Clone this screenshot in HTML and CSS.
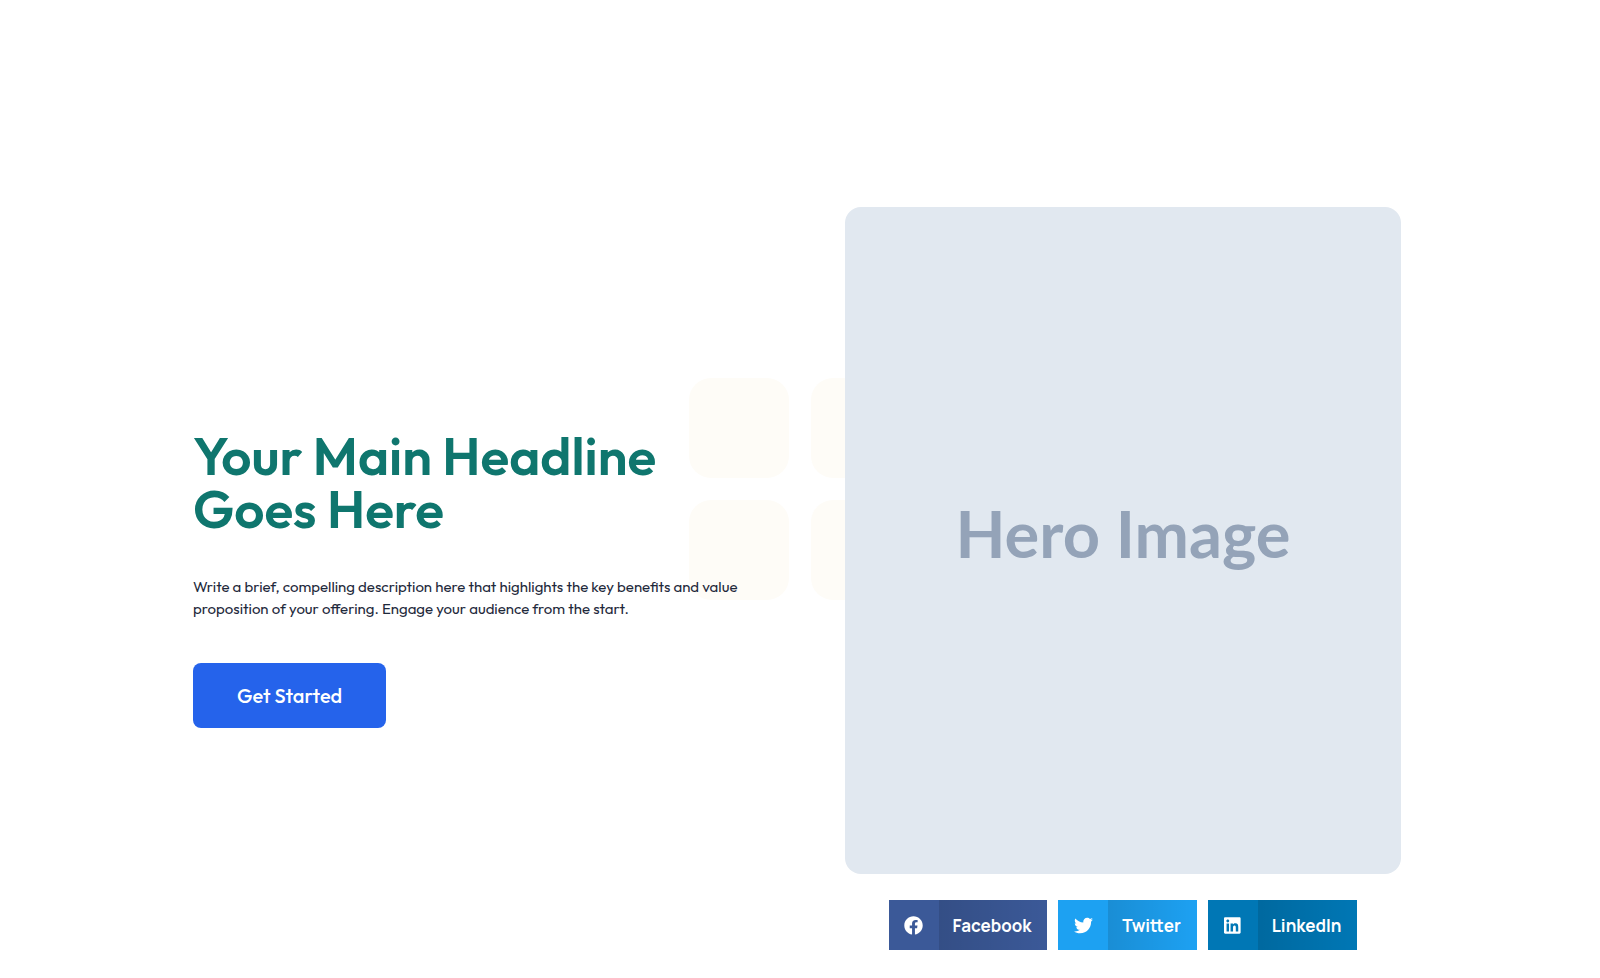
FILE: index.html
```html
<!DOCTYPE html>
<html lang="en">
<head>
<meta charset="UTF-8">
<meta name="viewport" content="width=device-width, initial-scale=1.0">
<title>Your Main Headline Goes Here</title>
<link rel="stylesheet" href="styles.css">
</head>
<body>
<main class="hero">
    <div class="hero-shapes" aria-hidden="true">
        <span></span>
        <span></span>
        <span></span>
        <span></span>
    </div>
    <div class="hero-inner">
        <div class="hero-text">
            <h1>Your Main Headline Goes Here</h1>
            <p>Write a brief, compelling description here that highlights the key benefits and value proposition of your offering. Engage your audience from the start.</p>
            <a class="btn" href="#">Get Started</a>
        </div>
        <div class="hero-media">
            <div class="hero-image">Hero Image</div>
            <div class="share">
                <button type="button" class="share-btn facebook">
                    <span class="share-icon">
                        <svg viewBox="0 0 512 512" aria-hidden="true"><path d="M504 256C504 119 393 8 256 8S8 119 8 256c0 123.780 90.690 226.380 209.250 245V327.690h-63V256h63v-54.640c0-62.150 37-96.480 93.670-96.480 27.140 0 55.520 4.840 55.520 4.840v61h-31.280c-30.800 0-40.410 19.120-40.410 38.730V256h68.780l-11 71.690h-57.780V501C413.310 482.380 504 379.780 504 256z"/></svg>
                    </span>
                    <span class="share-label">Facebook</span>
                </button>
                <button type="button" class="share-btn twitter">
                    <span class="share-icon">
                        <svg viewBox="0 0 512 512" aria-hidden="true"><path d="M459.370 151.716c.325 4.548.325 9.097.325 13.645 0 138.720-105.583 298.558-298.558 298.558-59.452 0-114.680-17.219-161.137-47.106 8.447.974 16.568 1.299 25.340 1.299 49.055 0 94.213-16.568 130.274-44.832-46.132-.975-84.792-31.188-98.112-72.772 6.498.974 12.995 1.624 19.818 1.624 9.421 0 18.843-1.300 27.614-3.573-48.081-9.747-84.143-51.980-84.143-102.985v-1.299c13.969 7.797 30.214 12.670 47.431 13.319-28.264-18.843-46.781-51.005-46.781-87.391 0-19.492 5.197-37.360 14.294-52.954 51.655 63.675 129.300 105.258 216.365 109.807-1.624-7.797-2.599-15.918-2.599-24.040 0-57.828 46.782-104.934 104.934-104.934 30.213 0 57.502 12.670 76.670 33.137 23.715-4.548 46.456-13.320 66.599-25.340-7.798 24.366-24.366 44.833-46.132 57.827 21.117-2.273 41.584-8.122 60.426-16.243-14.292 20.791-32.161 39.308-52.628 54.253z"/></svg>
                    </span>
                    <span class="share-label">Twitter</span>
                </button>
                <button type="button" class="share-btn linkedin">
                    <span class="share-icon">
                        <svg viewBox="0 0 448 512" aria-hidden="true"><path d="M416 32H31.900C14.300 32 0 46.500 0 64.300v383.400C0 465.500 14.300 480 31.900 480H416c17.600 0 32-14.500 32-32.300V64.300c0-17.800-14.400-32.300-32-32.300zM135.400 416H69V202.200h66.500V416zm-33.200-243c-21.300 0-38.500-17.300-38.500-38.500S80.900 96 102.200 96c21.200 0 38.500 17.300 38.500 38.500 0 21.300-17.200 38.500-38.500 38.500zm282.100 243h-66.400V312c0-24.800-.5-56.700-34.500-56.700-34.600 0-39.900 27-39.900 54.900V416h-66.400V202.200h63.700v29.200h.9c8.900-16.800 30.600-34.500 62.900-34.500 67.200 0 79.700 44.300 79.700 101.900V416z"/></svg>
                    </span>
                    <span class="share-label">LinkedIn</span>
                </button>
            </div>
        </div>
    </div>
</main>
</body>
</html>
```

FILE: styles.css
```css
* {
    box-sizing: border-box;
}

body {
    margin: 0;
    background: #fff;
    font-family: Outfit, Lato, sans-serif;
    color: #1e293b;
}

.hero {
    position: relative;
    min-height: 100vh;
    padding: 207px 38px 28px 32px;
}

/* decorative squares behind the content */
.hero-shapes {
    position: absolute;
    top: 50%;
    left: 50%;
    transform: translate(-50%, -50%);
    display: grid;
    grid-template-columns: 100px 100px;
    grid-auto-rows: 100px;
    gap: 22px;
}

.hero-shapes span {
    background: #fefcf7;
    border-radius: 22px;
}

.hero-inner {
    position: relative;
    display: grid;
    grid-template-columns: 1fr 1fr;
    gap: 96px;
    align-items: center;
    max-width: 1208px;
    margin: 0 auto;
}

h1 {
    margin: 0 0 41px;
    font-size: 53px;
    line-height: 53px;
    font-weight: 600;
    color: #0f766e;
}

.hero-text p {
    margin: 0 0 43px;
    font-size: 15px;
    line-height: 22px;
}

.btn {
    display: inline-flex;
    align-items: center;
    height: 65px;
    padding: 0 44px;
    border-radius: 8px;
    background: #2563eb;
    color: #fff;
    font-size: 20px;
    font-weight: 500;
    text-decoration: none;
    vertical-align: top;
}

.btn:hover {
    background: #1d4ed8;
}

.hero-image {
    display: flex;
    align-items: center;
    justify-content: center;
    aspect-ratio: 5 / 6;
    padding-bottom: 16px;
    border-radius: 16px;
    background: #e1e8f0;
    color: #94a3b8;
    font-family: Lato, sans-serif;
    font-size: 65px;
    font-weight: 700;
}

.share {
    display: flex;
    flex-wrap: wrap;
    justify-content: center;
    gap: 11px;
    margin-top: 26px;
}

.share-btn {
    display: flex;
    height: 50px;
    padding: 0;
    border: none;
    color: #fff;
    font-family: Manrope, Inter, sans-serif;
    font-size: 17px;
    font-weight: 700;
    cursor: pointer;
}

.share-icon {
    display: flex;
    align-items: center;
    justify-content: center;
    width: 50px;
    height: 50px;
}

.share-icon svg {
    height: 19px;
    fill: currentColor;
}

.share-label {
    display: flex;
    align-items: center;
    height: 50px;
    padding: 0 16px 0 14px;
    background: linear-gradient(90deg, rgba(0, 0, 0, 0.12), transparent);
}

.facebook {
    background: #3b5998;
}

.twitter {
    background: #1da1f2;
}

.linkedin {
    background: #0077b5;
}
```
